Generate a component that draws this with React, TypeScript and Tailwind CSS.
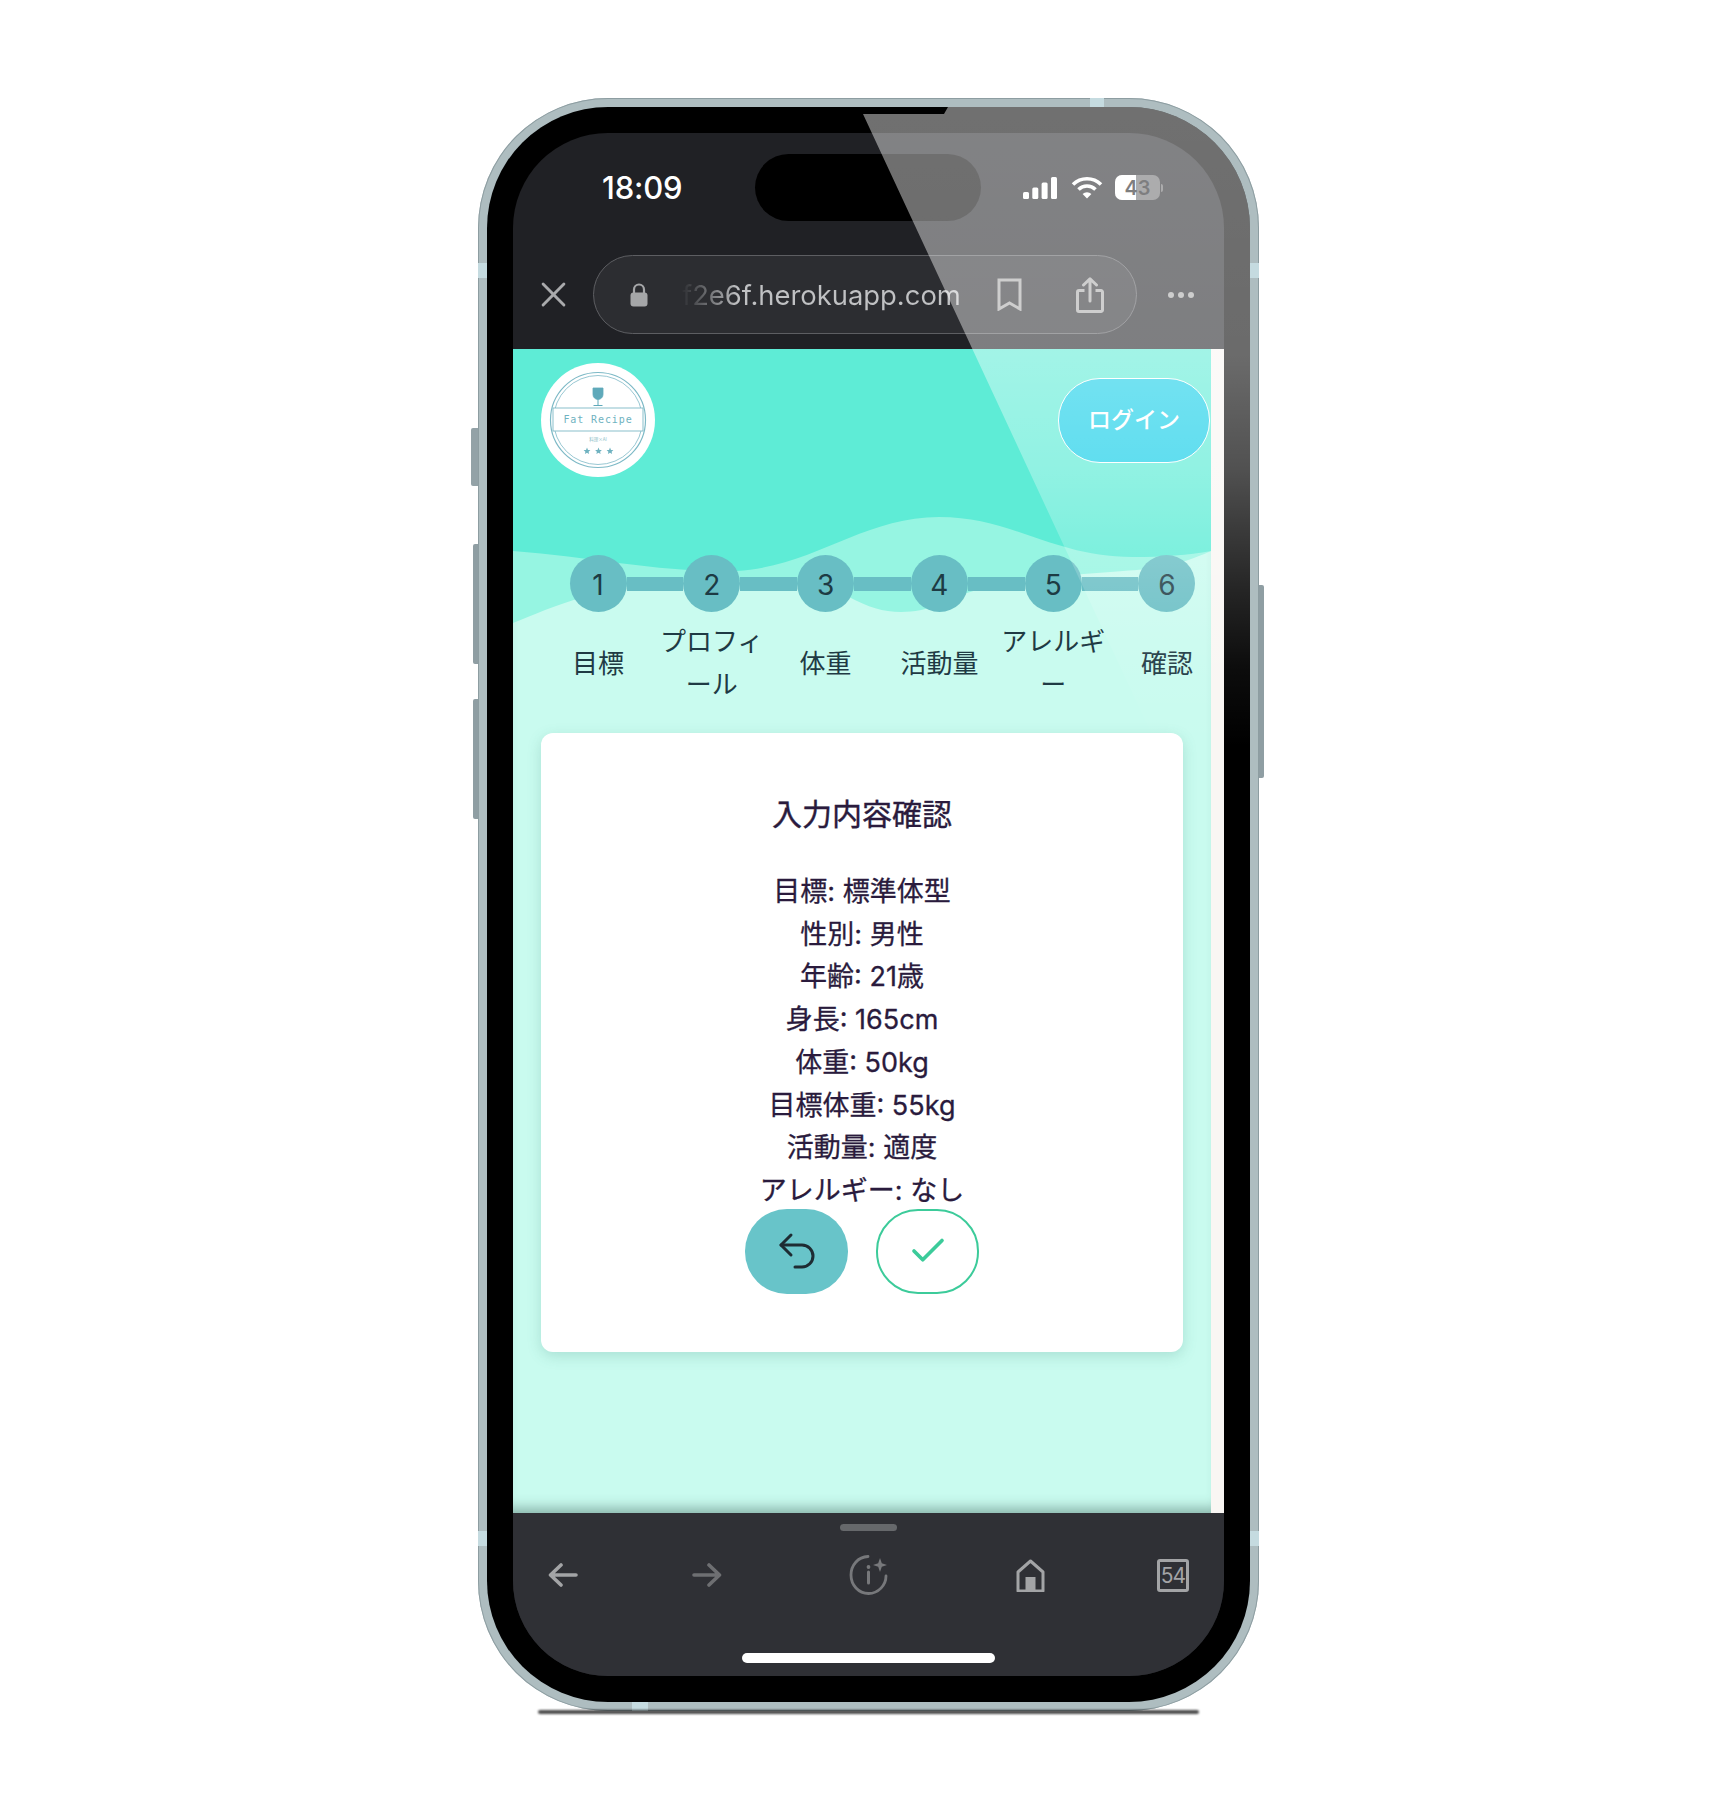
import { Check, Undo2 } from "lucide-react";

const steps = [
  { n: 1, label: "目標" },
  { n: 2, label: "プロフィール" },
  { n: 3, label: "体重" },
  { n: 4, label: "活動量" },
  { n: 5, label: "アレルギー" },
  { n: 6, label: "確認" },
];

const summary = [
  "目標: 標準体型",
  "性別: 男性",
  "年齢: 21歳",
  "身長: 165cm",
  "体重: 50kg",
  "目標体重: 55kg",
  "活動量: 適度",
  "アレルギー: なし",
];

function Star({ x }: { x: number }) {
  return (
    <path
      transform={`translate(${x} 88)`}
      d="M0-3.4 1 -1.1 3.4-.9 1.6.7 2.1 3 0 1.8-2.1 3-1.6.7-3.4-.9-1-1.1Z"
      fill="#6fb2c0"
    />
  );
}

function Logo() {
  return (
    <svg viewBox="0 0 114 114" className="w-[114px] h-[114px] shrink-0">
      <circle cx="57" cy="57" r="57" fill="#fff" />
      <circle cx="57" cy="57" r="47.5" fill="none" stroke="#7db9c6" strokeWidth="1.2" />
      <circle cx="57" cy="57" r="44.5" fill="none" stroke="#7db9c6" strokeWidth="0.8" />
      <rect x="12" y="45" width="90" height="23" fill="#fff" stroke="#7db9c6" strokeWidth="0.9" />
      <path d="M52 25h10v6.5a5 5 0 0 1-10 0Z" fill="#5fa9ba" stroke="#5fa9ba" strokeWidth="0.8" />
      <path d="M57 36.5V42M52.5 42.5h9" stroke="#5fa9ba" strokeWidth="1" fill="none" />
      <text
        x="57"
        y="60"
        textAnchor="middle"
        fontFamily="'DejaVu Sans Mono', monospace"
        fontSize="10"
        letterSpacing="0.9"
        fill="#6fb2c0"
      >
        Fat Recipe
      </text>
      <text x="57" y="78" textAnchor="middle" fontFamily="'Noto Sans CJK JP', sans-serif" fontSize="4.5" fill="#8fbfca">
        料理×AI
      </text>
      <Star x={46} />
      <Star x={57.5} />
      <Star x={69} />
    </svg>
  );
}

function StatusBar() {
  return (
    <div className="flex items-center h-[67px] mt-[21px]">
      <div className="w-[242px] pl-[89px] text-white text-[31px] font-medium tracking-[-0.2px] leading-none">18:09</div>
      <div className="w-[226px] h-[67px] rounded-full bg-black relative shrink-0" />
      <div className="flex items-center ml-[42px]">
        <svg viewBox="0 0 34 22" className="w-[34px] h-[22px]" fill="#fff">
          <rect x="0" y="15" width="6" height="7" rx="1.5" />
          <rect x="9.3" y="10.5" width="6" height="11.5" rx="1.5" />
          <rect x="18.6" y="5.5" width="6" height="16.5" rx="1.5" />
          <rect x="28" y="0" width="6" height="22" rx="1.5" />
        </svg>
        <svg viewBox="0 0 32 23" className="w-[32px] h-[23px] ml-[14px]" fill="none" stroke="#fff" strokeWidth="3.6">
          <path d="M2 8.5a20 20 0 0 1 28 0" />
          <path d="M7.5 13.5a12.2 12.2 0 0 1 17 0" />
          <path d="M16 22.5 11.6 18a6.2 6.2 0 0 1 8.8 0Z" fill="#fff" stroke="none" />
        </svg>
        <div className="relative w-[45px] h-[25px] ml-[12px] rounded-[7px] bg-[#6d6d6f] overflow-hidden">
          <div className="absolute inset-y-0 left-0 w-[21px] bg-white" />
          <span className="absolute inset-0 flex items-center justify-center text-[20px] font-semibold text-[#1c1c1e] leading-none">
            43
          </span>
        </div>
        <div className="w-[2px] h-[8px] ml-[1px] rounded-r-full bg-[#6d6d6f]" />
      </div>
    </div>
  );
}

function AddressRow() {
  return (
    <div className="flex items-center mt-[34px] mb-[15px]">
      <div className="w-[80px] flex justify-center">
        <svg viewBox="0 0 24 24" className="w-[25px] h-[25px]" fill="none" stroke="#a9aaac" strokeWidth="2.8" strokeLinecap="round">
          <path d="M2 2l20 20M22 2 2 22" />
        </svg>
      </div>
      <div className="w-[544px] h-[79px] rounded-full border-[1.5px] border-[#5d5e62] bg-[#2c2d31] flex items-center pl-[35px] shrink-0">
        <svg viewBox="0 0 20 24" className="w-[20px] h-[24px] shrink-0" fill="#a5a6a8">
          <path d="M5 10V6.5a5 5 0 0 1 10 0V10" fill="none" stroke="#a5a6a8" strokeWidth="2.2" />
          <rect x="1.5" y="9.5" width="17" height="14" rx="3" />
        </svg>
        <span className="ml-[33px] w-[280px] shrink-0 text-[27.4px] leading-[32px] whitespace-nowrap bg-gradient-to-r from-[#2f3034] via-[#c0c1c3] via-[20%] to-[#c0c1c3] bg-clip-text text-transparent">
          f2e6f.herokuapp.com
        </span>
        <svg viewBox="0 0 25 33" className="w-[25px] h-[33px] ml-[35px] shrink-0" fill="none" stroke="#aaaaaa" strokeWidth="3">
          <path d="M2 2h21v29l-10.5-6L2 31Z" />
        </svg>
        <svg viewBox="0 0 28 36" className="w-[28px] h-[36px] ml-[54px] shrink-0" fill="none" stroke="#aaaaaa" strokeWidth="3" strokeLinejoin="round">
          <path d="M8.5 13.5H3a1.5 1.5 0 0 0-1.5 1.5v18A1.5 1.5 0 0 0 3 34.5h22a1.5 1.5 0 0 0 1.5-1.5V15a1.5 1.5 0 0 0-1.500-1.5h-5.500" />
          <path d="M14 24V2M7.500 8 14 1.800 20.500 8" strokeLinecap="round" />
        </svg>
      </div>
      <div className="flex-1 flex justify-center gap-[4px]">
        <span className="w-[6px] h-[6px] rounded-full bg-[#a9a9a9]" />
        <span className="w-[6px] h-[6px] rounded-full bg-[#a9a9a9]" />
        <span className="w-[6px] h-[6px] rounded-full bg-[#a9a9a9]" />
      </div>
    </div>
  );
}

function Waves() {
  return (
    <svg viewBox="0 0 698 300" className="absolute top-0 left-0 w-[698px] h-[300px]">
      <path
        d="M0 274C40 258 90 235 170 232C250 230 300 236 336 248C355 258 370 263 388 263C415 263 435 252 454 244C500 228 560 226 610 222C640 220 665 217 698 202V0H0Z"
        fill="#96f5e2"
      />
      <path
        d="M0 202C80 208 150 224 223 222C300 218 350 168 426 168C500 168 540 208 620 208C650 208 675 206 698 202V0H0Z"
        fill="#5eecd6"
      />
    </svg>
  );
}

function Stepper() {
  return (
    <div className="relative ml-[28px] w-[683px] mt-[78px]">
      <div className="flex items-center ml-[28.5px]">
        {steps.map((s, i) => (
          <div key={s.n} className="flex items-center">
            <div className="w-[57px] h-[57px] rounded-full bg-[#68bec4] flex items-center justify-center text-[28px] pt-[3px] text-[#1d3b44] shrink-0">
              {s.n}
            </div>
            {i < 5 && <div className="w-[56.8px] h-[14px] bg-[#68bec4]" />}
          </div>
        ))}
      </div>
      <div className="grid grid-cols-6 items-center mt-[8px] h-[86px]">
        {steps.map((s) => (
          <div key={s.n} className="text-center text-[26px] leading-[43px] text-[#1f3a44] px-[4px]">
            {s.label}
          </div>
        ))}
      </div>
    </div>
  );
}

function SummaryCard() {
  return (
    <div className="mx-[28px] mt-[27px] w-[642px] h-[619px] bg-white rounded-[12px] shadow-[0_4px_14px_rgba(60,130,120,0.22)] pt-[61px] flex flex-col items-center text-[#2a1b3d]">
      <h2 className="text-[30px] leading-[40px] font-normal [-webkit-text-stroke:0.4px]">入力内容確認</h2>
      <div className="mt-[37px] -mb-[4px] text-center text-[27px] leading-[42.7px] [-webkit-text-stroke:0.3px]">
        {summary.map((line) => (
          <p key={line}>{line}</p>
        ))}
      </div>
      <div className="flex gap-[28px]">
        <button className="w-[103px] h-[85px] rounded-[42px] bg-[#68c4c9] flex items-center justify-center text-[#1e2c33]">
          <Undo2 size={48} strokeWidth={1.5} />
        </button>
        <button className="w-[103px] h-[85px] rounded-[42px] border-2 border-[#3ccb9a] bg-white flex items-center justify-center text-[#3ccb9a]">
          <Check size={42} strokeWidth={2.1} />
        </button>
      </div>
    </div>
  );
}

function Toolbar() {
  return (
    <div className="flex-1 bg-[#2f3035] flex flex-col relative">
      <div className="mt-[11px] ml-[327px] w-[57px] h-[7px] rounded-full bg-[#66686b]" />
      <div className="grid grid-cols-[100px_188px_136px_186px_100px] items-center mt-[24px] h-[40px] justify-items-center">
        <svg viewBox="0 0 30 24" className="w-[30px] h-[24px]" fill="none" stroke="#a3a4a6" strokeWidth="3.6" strokeLinecap="round" strokeLinejoin="round">
          <path d="M28 12H3M13 2 2.500 12 13 22" />
        </svg>
        <svg viewBox="0 0 30 24" className="w-[30px] h-[24px]" fill="none" stroke="#6e6f72" strokeWidth="3.6" strokeLinecap="round" strokeLinejoin="round">
          <path d="M2 12h25M17 2l10.500 10L17 22" />
        </svg>
        <svg viewBox="0 0 40 40" className="w-[40px] h-[40px]" fill="none" stroke="#77787b" strokeWidth="2.8" strokeLinecap="round">
          <path d="M19 1.500C9 2 2 10 2 20c0 10 7.500 18.500 17.500 18.500S37 30 37 21" />
          <path d="M19.500 17v11" strokeWidth="3" />
          <circle cx="19.500" cy="12" r="1.900" fill="#77787b" stroke="none" />
          <path d="M31 3l1.800 5.200L38 10l-5.200 1.800L31 17l-1.800-5.200L24 10l5.200-1.800Z" fill="#77787b" stroke="none" />
        </svg>
        <svg viewBox="0 0 29 33" className="w-[29px] h-[33px]" fill="none" stroke="#a3a4a6" strokeWidth="3">
          <path d="M2 32V13L14.500 2 27 13v19Z" strokeLinejoin="round" />
          <rect x="9.500" y="18" width="10" height="14" fill="#a3a4a6" stroke="none" />
        </svg>
        <div className="w-[32px] h-[33px] rounded-[3px] border-[3px] border-[#a3a4a6] flex items-center justify-center text-[#a3a4a6] text-[21px] leading-none tracking-[-1px]">
          54
        </div>
      </div>
      <div className="absolute bottom-[13px] left-[229px] w-[253px] h-[10px] rounded-full bg-white" />
    </div>
  );
}

function Glare() {
  return (
    <svg viewBox="0 0 764 800" className="absolute top-0 left-0 w-[764px] h-[800px] pointer-events-none">
      <defs>
        <linearGradient id="glare" x1="0" y1="0" x2="0" y2="1">
          <stop offset="0" stopColor="#fff" stopOpacity="0.44" />
          <stop offset="0.31" stopColor="#fff" stopOpacity="0.42" />
          <stop offset="0.45" stopColor="#fff" stopOpacity="0.32" />
          <stop offset="0.555" stopColor="#fff" stopOpacity="0.2" />
          <stop offset="0.6" stopColor="#fff" stopOpacity="0.15" />
          <stop offset="0.7" stopColor="#fff" stopOpacity="0.05" />
          <stop offset="0.8" stopColor="#fff" stopOpacity="0" />
        </linearGradient>
      </defs>
      <path d="M376 7H457L461 0H764V800H745Z" fill="url(#glare)" />
    </svg>
  );
}

export default function App() {
  return (
    <div className="min-h-[1810px] bg-white pt-[98px] pl-[1px] flex justify-center font-['Inter','Noto_Sans_CJK_JP',sans-serif]">
      <div className="relative w-[781px] h-[1613px] rounded-[130px] bg-[#aebdc0] p-[9px] shadow-[inset_0_0_0_1px_#8d9da1]">
        {/* side buttons */}
        <div className="absolute -left-[7px] top-[330px] w-[7px] h-[58px] rounded-l-[2px] bg-[#93a2a7]" />
        <div className="absolute -left-[5px] top-[446px] w-[5px] h-[120px] rounded-l-[2px] bg-[#8f9ea3]" />
        <div className="absolute -left-[5px] top-[601px] w-[5px] h-[120px] rounded-l-[2px] bg-[#8f9ea3]" />
        <div className="absolute -right-[5px] top-[487px] w-[5px] h-[193px] rounded-r-[2px] bg-[#8f9ea3]" />

        {/* antenna bands */}
        <div className="absolute top-0 left-[612px] w-[14px] h-[9px] bg-[#c5dbe0]" />
        <div className="absolute bottom-0 left-[154px] w-[16px] h-[9px] bg-[#c5dbe0]" />
        <div className="absolute left-0 top-[165px] w-[9px] h-[15px] bg-[#c5dbe0]" />
        <div className="absolute right-0 top-[165px] w-[9px] h-[15px] bg-[#c5dbe0]" />
        <div className="absolute left-0 top-[1433px] w-[9px] h-[15px] bg-[#c5dbe0]" />
        <div className="absolute right-0 top-[1433px] w-[9px] h-[15px] bg-[#c5dbe0]" />

        {/* contact shadow */}
        <div className="absolute -bottom-[3px] left-[60px] right-[60px] h-[4px] rounded-full bg-black/70 blur-[1px]" />

        <div className="relative h-full rounded-[121px] bg-black p-[26px] overflow-hidden">
          <div className="h-full rounded-[95px] overflow-hidden flex flex-col bg-[#202125]">
            <div className="h-[216px] shrink-0 flex flex-col">
              <StatusBar />
              <AddressRow />
            </div>

            <div className="h-[1164px] shrink-0 flex bg-[#f9f6f3]">
              <div className="relative w-[698px] shrink-0 bg-[#c9fbef] shadow-[inset_0_-14px_14px_-10px_rgba(40,70,65,0.45)]">
                <Waves />
                <div className="relative">
                  <div className="flex items-start justify-between pt-[14px] pl-[28px] pr-[1px]">
                    <Logo />
                    <button className="mt-[15px] w-[152px] h-[85px] rounded-[42px] border-[1.5px] border-white bg-[#15cee8] text-white text-[23px] font-medium">
                      ログイン
                    </button>
                  </div>
                  <Stepper />
                  <SummaryCard />
                </div>
              </div>
            </div>

            <Toolbar />
          </div>
          <Glare />
        </div>
      </div>
    </div>
  );
}
